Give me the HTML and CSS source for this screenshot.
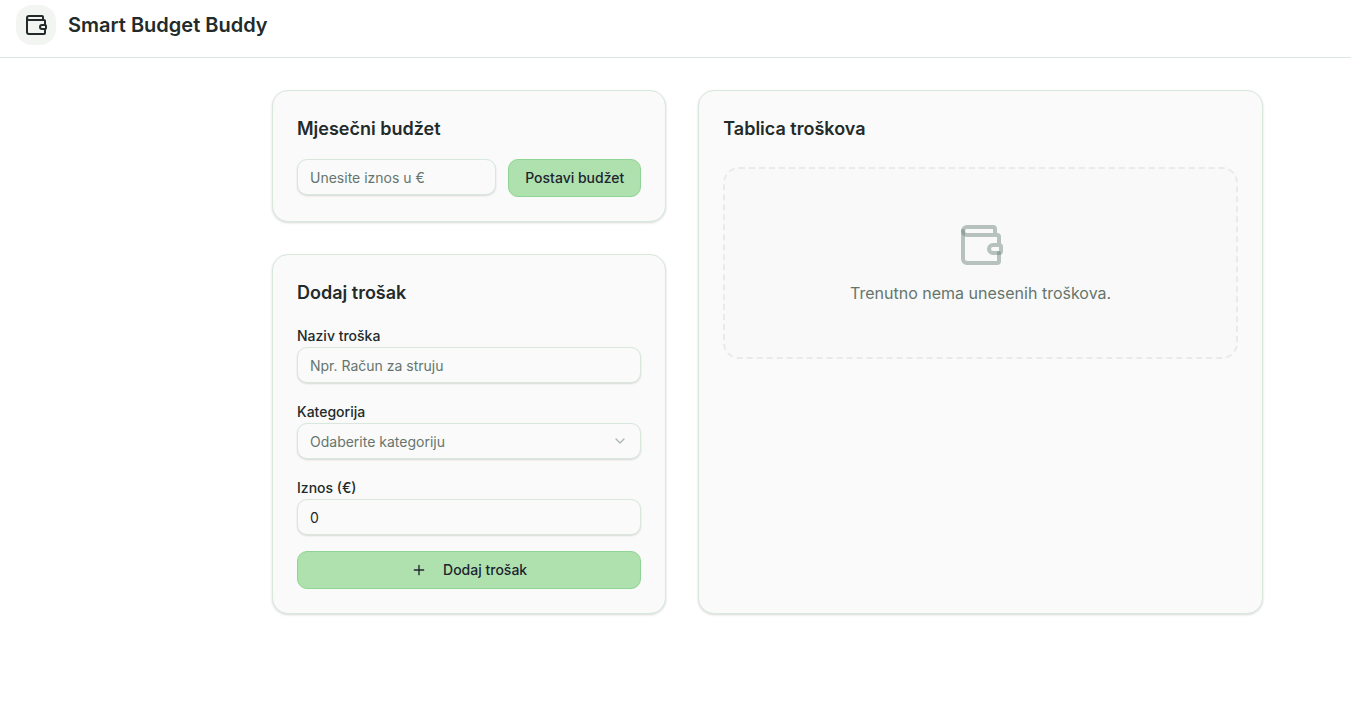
FILE: index.html
```html
<!DOCTYPE html>
<html lang="hr">
<head>
    <meta charset="UTF-8">
    <meta name="viewport" content="width=device-width, initial-scale=1.0">
    <title>Smart Budget Buddy</title>
    <link rel="stylesheet" href="styles.css">
</head>
<body>

<header class="header">
    <div class="logo">
        <svg class="icon" width="24" height="24" viewBox="0 0 24 24" aria-hidden="true">
            <path d="M19 7V4a1 1 0 0 0-1-1H5a2 2 0 0 0 0 4h15a1 1 0 0 1 1 1v4h-3a2 2 0 0 0 0 4h3a1 1 0 0 0 1-1v-2a1 1 0 0 0-1-1"/>
            <path d="M3 5v14a2 2 0 0 0 2 2h15a1 1 0 0 0 1-1v-4"/>
        </svg>
    </div>
    <h1>Smart Budget Buddy</h1>
</header>

<main class="content">
    <div class="forms">
        <section class="card">
            <h2>Mjesečni budžet</h2>
            <form class="budget-form">
                <input type="text" class="field" id="budget" placeholder="Unesite iznos u €" aria-label="Mjesečni budžet">
                <button type="button" class="btn">Postavi budžet</button>
            </form>
        </section>

        <section class="card">
            <h2>Dodaj trošak</h2>
            <form class="expense-form">
                <div class="form-group">
                    <label for="name">Naziv troška</label>
                    <input type="text" class="field" id="name" placeholder="Npr. Račun za struju">
                </div>
                <div class="form-group">
                    <label for="category">Kategorija</label>
                    <div class="select-wrap">
                        <select class="field" id="category">
                            <option value="">Odaberite kategoriju</option>
                        </select>
                        <svg class="icon chevron" width="16" height="16" viewBox="0 0 24 24" aria-hidden="true">
                            <path d="m6 9 6 6 6-6"/>
                        </svg>
                    </div>
                </div>
                <div class="form-group">
                    <label for="amount">Iznos (€)</label>
                    <input type="number" class="field" id="amount" value="0">
                </div>
                <button type="button" class="btn">
                    <svg class="icon" width="16" height="16" viewBox="0 0 24 24" aria-hidden="true">
                        <path d="M5 12h14M12 5v14"/>
                    </svg>
                    Dodaj trošak
                </button>
            </form>
        </section>
    </div>

    <section class="card table-card">
        <h2>Tablica troškova</h2>
        <div class="empty">
            <svg class="icon" width="48" height="48" viewBox="0 0 24 24" aria-hidden="true">
                <path d="M19 7V4a1 1 0 0 0-1-1H5a2 2 0 0 0 0 4h15a1 1 0 0 1 1 1v4h-3a2 2 0 0 0 0 4h3a1 1 0 0 0 1-1v-2a1 1 0 0 0-1-1"/>
                <path d="M3 5v14a2 2 0 0 0 2 2h15a1 1 0 0 0 1-1v-4"/>
            </svg>
            <p>Trenutno nema unesenih troškova.</p>
        </div>
    </section>
</main>

</body>
</html>
```
FILE: styles.css
```css
* {
    box-sizing: border-box;
}
body {
    margin: 0;
    font-family: Inter, sans-serif;
    font-size: 16px;
    line-height: 24px;
    color: #222b2a;
    background-color: #ffffff;
}
h1, h2, p {
    margin: 0;
}
.icon {
    flex-shrink: 0;
    fill: none;
    stroke: currentColor;
    stroke-width: 2;
    stroke-linecap: round;
    stroke-linejoin: round;
}
.header {
    display: flex;
    align-items: center;
    gap: 12px;
    padding: 5px 16px 12px;
    border-bottom: 1px solid #dbe7de;
}
.header h1 {
    font-size: 20px;
    line-height: 28px;
    font-weight: 600;
}
.logo {
    display: flex;
    align-items: center;
    justify-content: center;
    width: 40px;
    height: 40px;
    border-radius: 16px;
    background: #f2f5f2;
}
.content {
    display: grid;
    grid-template-columns: repeat(12, 1fr);
    gap: 32px;
    max-width: 1023px;
    margin-left: 256px;
    padding: 32px 16px;
}
.forms {
    grid-column: span 5;
    display: flex;
    flex-direction: column;
    gap: 32px;
}
.card {
    padding: 24px;
    border: 1px solid #d9e8dc;
    border-radius: 16px;
    background: #fafafa;
    box-shadow: 0 1px 3px rgba(0, 0, 0, 0.1), 0 1px 2px rgba(0, 0, 0, 0.06);
}
.card h2 {
    margin-bottom: 16px;
    font-size: 18px;
    line-height: 28px;
    font-weight: 600;
}
.table-card {
    grid-column: span 7;
}
.table-card h2 {
    margin-bottom: 24px;
}
.budget-form {
    display: flex;
    align-items: flex-start;
    gap: 12px;
}
.budget-form .field {
    flex: 1;
    min-width: 0;
}
.expense-form {
    display: flex;
    flex-direction: column;
    gap: 16px;
}
.form-group label {
    display: block;
    padding-top: 2px;
    font-size: 14px;
    line-height: 22px;
    font-weight: 500;
}
.field {
    display: block;
    width: 100%;
    height: 36px;
    padding: 0 12px;
    border: 1px solid #d9e8dc;
    border-radius: 10px;
    background: #fafafa;
    box-shadow: 0 1px 2px rgba(0, 0, 0, 0.14);
    font-family: inherit;
    font-size: 14px;
    color: #222b2a;
    appearance: none;
}
.field::placeholder {
    color: #65756d;
}
select.field {
    color: #65756d;
}
.field[type="number"] {
    appearance: textfield;
}
.select-wrap {
    position: relative;
}
.chevron {
    position: absolute;
    top: 10px;
    right: 13px;
    color: #65756d;
    opacity: 0.5;
    pointer-events: none;
}
.btn {
    display: flex;
    align-items: center;
    justify-content: center;
    gap: 16px;
    padding: 8px 16px;
    border: 1px solid #8fd494;
    border-radius: 10px;
    background: #afe1af;
    font-family: inherit;
    font-size: 14px;
    line-height: 20px;
    font-weight: 500;
    color: #20242f;
    white-space: nowrap;
    cursor: pointer;
}
.btn:hover {
    background: #9ed99e;
}
.empty {
    display: flex;
    flex-direction: column;
    align-items: center;
    gap: 12px;
    padding: 52px 16px;
    border: 2px dashed #e8ebe9;
    border-radius: 16px;
    background: #f9f9f9;
    color: #65756d;
    text-align: center;
}
.empty .icon {
    stroke: rgba(101, 125, 115, 0.45);
}
```
